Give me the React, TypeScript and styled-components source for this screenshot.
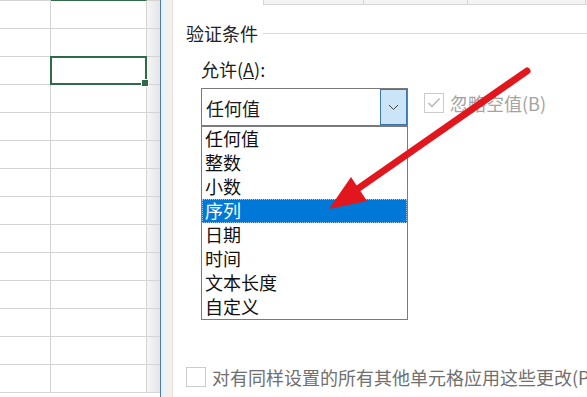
import React from 'react'
import styled, { createGlobalStyle } from 'styled-components'

const GlobalStyle = createGlobalStyle`
  html, body {
    margin: 0;
    padding: 0;
    background: #ffffff;
  }
  body {
    font-family: "Noto Sans CJK SC", "Noto Sans", sans-serif;
  }
`

const Screen = styled.div`
  position: relative;
  width: 587px;
  height: 397px;
  overflow: hidden;
  display: flex;
  background: #ffffff;
`

// ---- spreadsheet behind the dialog ----
const Sheet = styled.div`
  position: relative;
  width: 160px;
  height: 397px;
  overflow: hidden;
`

const Grid = styled.div`
  display: grid;
  grid-template-columns: 51px 96px 13px;
  grid-auto-rows: 28px;
  margin-top: -27px;
`

const Cell = styled.div<{ $shade?: boolean; $topGreen?: boolean }>`
  box-sizing: border-box;
  border-bottom: 1px solid ${p => (p.$topGreen ? '#2d6b4a' : '#d4d4d4')};
  border-right: 1px solid #d4d4d4;
  background: ${p => (p.$shade ? 'linear-gradient(to right, #f6f6f7, #e4e4e8)' : '#ffffff')};
  ${p => p.$shade && 'border-right: none;'}
`

const Selection = styled.div`
  position: absolute;
  left: 50px;
  top: 56px;
  width: 97px;
  height: 29px;
  box-sizing: border-box;
  border: 2px solid #2d6b4a;
`

const FillHandle = styled.div`
  position: absolute;
  right: -4px;
  bottom: -4px;
  width: 6px;
  height: 6px;
  background: #2d6b4a;
  border: 1px solid #ffffff;
`

const WindowEdge = styled.div`
  width: 1px;
  background: #4f7aa3;
`

const EdgeStrip = styled.div`
  width: 11px;
  background: linear-gradient(to right, #e9f2f8 0, #e9f2f8 6px, #f6f1e8 6px, #f6f1e8 11px);
`

// ---- dialog ----
const Dialog = styled.div`
  position: relative;
  flex: 1;
  display: flex;
  flex-direction: column;
  background: #ffffff;
  border-left: 1px solid #e2e2e2;
  padding-left: 13px;
  overflow: hidden;
  white-space: nowrap;
  font-size: 18px;
  line-height: 22px;
  color: #1a1a1a;
`

const TabStrip = styled.div`
  display: flex;
  height: 4px;
  margin-left: 77px;
  border-bottom: 1px solid #d6d6d6;
  background: #f4f4f4;
`

const Tab = styled.div<{ $w: number }>`
  width: ${p => p.$w}px;
  flex: none;
  border-left: 1px solid #d6d6d6;
`

const GroupHeader = styled.div`
  display: flex;
  align-items: center;
  margin-top: 17px;
  color: #222222;
`

const GroupLine = styled.div`
  flex: 1;
  height: 0;
  margin-left: 5px;
  margin-top: 0;
  border-top: 1px solid #dadada;
`

const Group = styled.div`
  padding-left: 15px;
`

const Label = styled.div`
  margin-top: 14px;
`

const ControlRow = styled.div`
  display: flex;
  align-items: flex-start;
  margin-top: 8px;
`

const Combo = styled.div`
  position: relative;
  width: 207px;
  height: 38px;
  box-sizing: border-box;
  border: 1px solid #7a7a7a;
  display: flex;
  align-items: center;
  padding-left: 4px;
`

const ComboText = styled.span`
  flex: 1;
  padding-top: 1px;
`

const ComboButton = styled.div`
  align-self: stretch;
  width: 27px;
  box-sizing: border-box;
  border: 1px solid #3b78ad;
  background: #cce4f7;
  display: flex;
  align-items: center;
  justify-content: center;
`

const DropList = styled.div`
  position: absolute;
  left: -1px;
  top: 37px;
  width: 207px;
  box-sizing: border-box;
  border: 1px solid #7a7a7a;
  background: #ffffff;
  z-index: 2;
`

const Item = styled.div<{ $active?: boolean }>`
  height: 24px;
  box-sizing: border-box;
  padding-left: 3px;
  line-height: 23px;
  background: ${p => (p.$active ? '#0078d7' : 'transparent')};
  color: ${p => (p.$active ? '#ffffff' : '#111111')};
  outline: ${p => (p.$active ? '1px dotted #9cc8ee' : 'none')};
  outline-offset: -1px;
`

const Check = styled.label<{ $dim?: boolean }>`
  display: flex;
  align-items: center;
  gap: 6px;
  color: ${p => (p.$dim ? '#a3a3a3' : '#707070')};
`

const Box = styled.span`
  flex: none;
  width: 20px;
  height: 20px;
  box-sizing: border-box;
  border: 1px solid #cccccc;
  background: #ffffff;
  display: flex;
  align-items: center;
  justify-content: center;
`

const IgnoreBlank = styled(Check)`
  margin-left: 16px;
  margin-top: 4px;
`

const ApplyAll = styled(Check)`
  margin-top: auto;
  margin-bottom: 9px;
`

const ArrowLayer = styled.svg`
  position: absolute;
  left: 0;
  top: 0;
  pointer-events: none;
  z-index: 5;
`

const items = ['任何值', '整数', '小数', '序列', '日期', '时间', '文本长度', '自定义']

const App: React.FC = () => {
  const rows = Array.from({ length: 15 })
  return (
    <Screen>
      <GlobalStyle />
      <Sheet>
        <Grid>
          {rows.map((_, i) => (
            <React.Fragment key={i}>
              <Cell />
              <Cell $topGreen={i === 0} />
              <Cell $shade />
            </React.Fragment>
          ))}
        </Grid>
        <Selection>
          <FillHandle />
        </Selection>
      </Sheet>
      <WindowEdge />
      <EdgeStrip />
      <Dialog>
        <TabStrip>
          <Tab $w={99} />
          <Tab $w={103} />
          <Tab $w={117} />
          <Tab $w={20} />
        </TabStrip>
        <GroupHeader>
          验证条件
          <GroupLine />
        </GroupHeader>
        <Group>
          <Label>
            允许(<u>A</u>):
          </Label>
          <ControlRow>
            <Combo>
              <ComboText>任何值</ComboText>
              <ComboButton>
                <svg width="11" height="7" viewBox="0 0 11 7">
                  <path d="M1 1 L5.5 5.5 L10 1" fill="none" stroke="#404040" strokeWidth="1" />
                </svg>
              </ComboButton>
              <DropList>
                {items.map(t => (
                  <Item key={t} $active={t === '序列'}>
                    {t}
                  </Item>
                ))}
              </DropList>
            </Combo>
            <IgnoreBlank $dim>
              <Box>
                <svg width="14" height="12" viewBox="0 0 14 12">
                  <path d="M1.5 6 L5 9.5 L12.5 1.5" fill="none" stroke="#b4b4b4" strokeWidth="1.4" />
                </svg>
              </Box>
              忽略空值(B)
            </IgnoreBlank>
          </ControlRow>
        </Group>
        <ApplyAll>
          <Box />
          对有同样设置的所有其他单元格应用这些更改(P)
        </ApplyAll>
      </Dialog>
      <ArrowLayer width="587" height="397" viewBox="0 0 587 397">
        <line x1="527" y1="71" x2="356" y2="190" stroke="#e2161d" strokeWidth="7" strokeLinecap="round" />
        <polygon points="329,209 351,177 367,201" fill="#e2161d" />
      </ArrowLayer>
    </Screen>
  )
}

export default App
